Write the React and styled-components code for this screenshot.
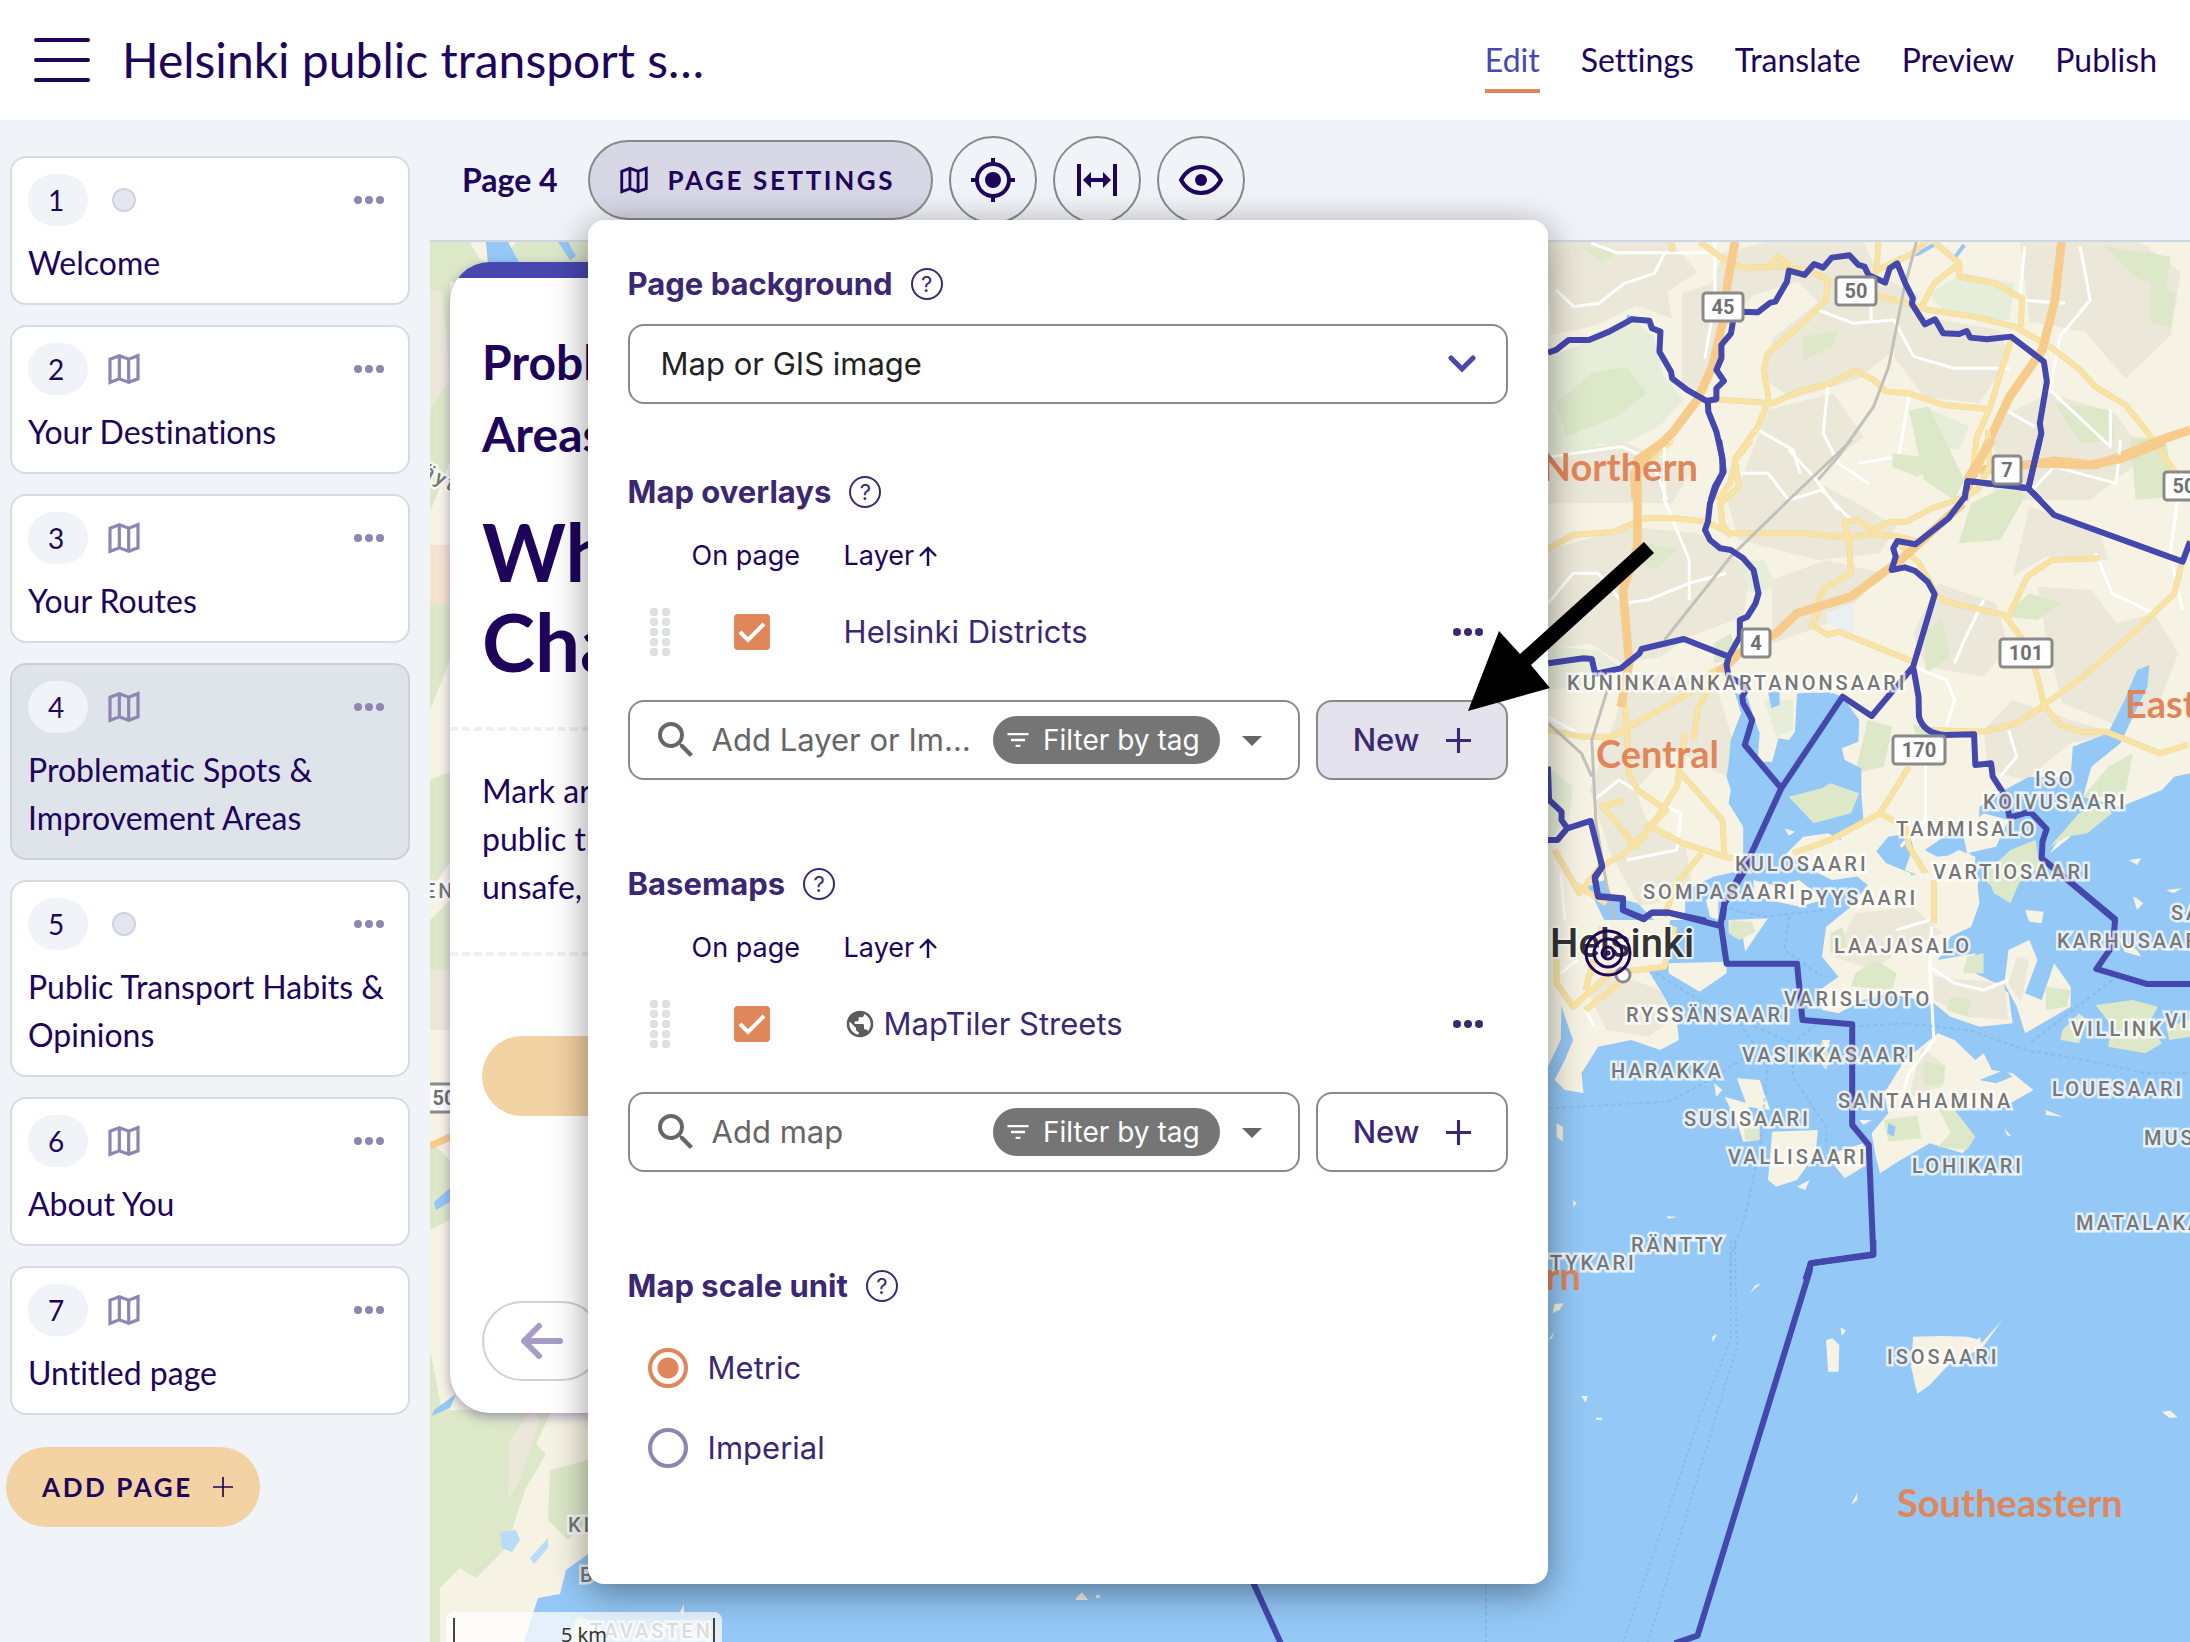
import React, { useState } from 'react'
import styled, { createGlobalStyle } from 'styled-components'
import { MdArrowDropDown, MdFilterList, MdPublic, MdSearch } from 'react-icons/md'

const GlobalStyle = createGlobalStyle`
    * {
        box-sizing: border-box;
    }

    body {
        margin: 0;
        background: #f0f3f8;
        color: #1e045b;
        font-family: Lato, sans-serif;
        font-size: 32px;
        font-variant-ligatures: none;
        line-height: 48px;
    }

    button, input, select {
        font: inherit;
        color: inherit;
    }

    h1, h2, h3, p {
        margin: 0;
    }

    svg {
        display: block;
        flex: none;
    }
`

const Page = styled.div`
    display: flex;
    flex-direction: column;
    height: 100vh;
    overflow: hidden;
`

const Header = styled.header`
    display: flex;
    align-items: center;
    flex: none;
    height: 120px;
    padding: 0 33px 0 34px;
    background: #fff;
`

const MenuButton = styled.button`
    padding: 0;
    border: 0;
    background: none;
`

const SurveyTitle = styled.h1`
    max-width: 584px;
    margin-left: 32px;
    overflow: hidden;
    font-size: 48px;
    font-weight: 400;
    line-height: 72px;
    text-overflow: ellipsis;
    white-space: nowrap;
`

const Nav = styled.nav`
    display: flex;
    gap: 41px;
    margin-left: auto;
`

const NavLink = styled.a`
    padding: 8px 0 5px;
    border-bottom: 4px solid ${props => props.$active ? '#df875a' : 'transparent'};
    color: ${props => props.$active ? '#4747ae' : '#1e045b'};
    text-decoration: none;
`

const Body = styled.div`
    display: flex;
    flex: 1;
    min-height: 0;
`

const Sidebar = styled.aside`
    display: flex;
    flex-direction: column;
    flex: none;
    gap: 20px;
    width: 430px;
    padding: 36px 20px 0 10px;
`

const PageCard = styled.article`
    padding: 16px;
    border: 2px solid ${props => props.$active ? '#c9d2dc' : '#d4dbe4'};
    border-radius: 16px;
    background: ${props => props.$active ? '#dfe3ea' : '#fff'};
`

const PageCardTop = styled.div`
    display: flex;
    align-items: center;
    height: 52px;
    margin-bottom: 13px;
    color: #8f85b3;
`

const PageNumber = styled.span`
    width: 60px;
    padding-right: 4px;
    border-radius: 26px;
    background: #f0f3f8;
    color: #1e045b;
    font-size: 28px;
    line-height: 52px;
    text-align: center;
`

const PageKind = styled.span`
    display: flex;
    justify-content: center;
    width: 32px;
    margin-left: 20px;
`

const Dot = styled.span`
    width: 24px;
    height: 24px;
    border: 2px solid #ccd3e1;
    border-radius: 50%;
    background: #e6e6f3;
`

const MoreButton = styled.button`
    display: block;
    margin-left: auto;
    padding: 8px;
    border: 0;
    background: none;
    color: inherit;
`

const PageName = styled.p`
    font-size: 32px;
    line-height: 48px;
`

const AddPageButton = styled.button`
    display: flex;
    align-items: center;
    align-self: flex-start;
    gap: 20px;
    height: 80px;
    margin: 12px 0 0 -4px;
    padding: 0 27px 0 36px;
    border: 0;
    border-radius: 40px;
    background: #f3d2a4;
    font-size: 26px;
    font-weight: 700;
    letter-spacing: .1em;
`

const Workspace = styled.main`
    display: flex;
    flex-direction: column;
    flex: 1;
    min-width: 0;
`

const Toolbar = styled.div`
    position: relative;
    z-index: 2;
    display: flex;
    align-items: center;
    flex: none;
    gap: 16px;
    height: 122px;
    padding-left: 32px;
    border-bottom: 2px solid #cdd7e3;
`

const ToolbarLabel = styled.strong`
    margin-right: 14px;
`

const PopoverAnchor = styled.div`
    position: relative;
`

const SettingsButton = styled.button`
    display: flex;
    align-items: center;
    gap: 20px;
    height: 80px;
    padding: 0 36px 0 30px;
    border: 2px solid #848c8b;
    border-radius: 40px;
    background: #d8d7e5;
    font-size: 26px;
    font-weight: 700;
    letter-spacing: .1em;
`

const RoundButton = styled.button`
    display: flex;
    align-items: center;
    justify-content: center;
    width: 88px;
    height: 88px;
    padding: 0;
    border: 2px solid #848c8b;
    border-radius: 50%;
    background: #f0f3f8;
`

const Panel = styled.section`
    position: absolute;
    z-index: 3;
    top: 100%;
    left: 0;
    width: 960px;
    padding: 44px 40px 96px;
    border-radius: 16px;
    background: #fff;
    box-shadow: 0 8px 36px rgba(0, 0, 0, .42);
    color: #3b2772;
    font-family: Inter, sans-serif;
    font-size: 31px;
`

const PanelSection = styled.section`
    margin-bottom: ${props => props.$after}px;
`

const SectionHeading = styled.div`
    display: flex;
    align-items: center;
    gap: 18px;
    height: 40px;
`

const SectionTitle = styled.h2`
    font-size: 31px;
    font-weight: 700;
    line-height: 40px;
`

const HelpButton = styled.button`
    width: 32px;
    height: 32px;
    padding: 0;
    border: 2px solid #3b2772;
    border-radius: 50%;
    background: none;
    font-size: 22px;
    line-height: 28px;
`

const SelectBox = styled.div`
    display: grid;
    align-items: center;
    margin-top: 20px;

    > * {
        grid-area: 1 / 1;
    }

    svg {
        justify-self: end;
        margin-right: 32px;
        pointer-events: none;
    }
`

const Select = styled.select`
    width: 100%;
    height: 80px;
    padding: 0 80px 0 31px;
    border: 2px solid #848c8b;
    border-radius: 16px;
    appearance: none;
    background: #fff;
    color: #222;
`

const LayerTable = styled.table`
    width: 100%;
    margin: 24px 0 12px;
    border-collapse: collapse;
    table-layout: fixed;
`

const HeadCell = styled.th`
    width: ${props => props.$width};
    height: 40px;
    padding: 0 0 0 ${props => props.$indent || 0}px;
    color: #1e045b;
    font-size: 27px;
    font-weight: 400;
    line-height: 40px;
    text-align: left;
    white-space: nowrap;
`

const SortButton = styled.button`
    display: flex;
    align-items: center;
    gap: 5px;
    padding: 0;
    border: 0;
    background: none;
`

const Cell = styled.td`
    height: 112px;
    padding: 0 ${props => props.$end || 0}px 0 ${props => props.$indent || 0}px;
`

const DragHandle = styled.span`
    display: grid;
    grid-template-columns: 8px 8px;
    gap: 2px 4px;
    margin-left: 22px;

    i {
        height: 8px;
        border-radius: 3px;
        background: #dde1e2;
    }
`

const CheckWrap = styled.span`
    display: grid;
    place-items: center;

    > * {
        grid-area: 1 / 1;
    }

    svg {
        pointer-events: none;
    }
`

const Checkbox = styled.input`
    width: 36px;
    height: 36px;
    margin: 0;
    border: 2px solid #df875a;
    border-radius: 4px;
    appearance: none;

    &:checked {
        background: #df875a;
    }
`

const LayerName = styled.label`
    display: flex;
    align-items: center;
    gap: 8px;

    svg {
        color: #5c5c5c;
    }
`

const AddRow = styled.div`
    display: flex;
    gap: 16px;
`

const SearchBox = styled.div`
    display: flex;
    align-items: center;
    flex: 1;
    min-width: 0;
    height: 80px;
    padding: 0 22px;
    border: 2px solid #848c8b;
    border-radius: 16px;
    color: #666;
`

const SearchInput = styled.input`
    flex: 1;
    min-width: 0;
    margin: 0 16px 0 12px;
    padding: 0;
    border: 0;
    outline: 0;
    background: none;
    text-overflow: ellipsis;

    &::placeholder {
        color: #666;
        opacity: 1;
    }
`

const FilterChip = styled.button`
    display: flex;
    align-items: center;
    gap: 11px;
    height: 48px;
    margin-right: 8px;
    padding: 0 20px 0 11px;
    border: 0;
    border-radius: 24px;
    background: #757575;
    color: #fff;
    font-size: 28px;
    white-space: nowrap;
`

const NewButton = styled.button`
    display: flex;
    align-items: center;
    justify-content: center;
    gap: 26px;
    width: 192px;
    height: 80px;
    padding: 0;
    border: 2px solid #848c8b;
    border-radius: 16px;
    background: ${props => props.$active ? '#e4e2ed' : '#fff'};
    font-weight: 500;
`

const RadioList = styled.div`
    margin-top: 22px;
    padding-left: 20px;
`

const RadioLabel = styled.label`
    display: flex;
    align-items: center;
    gap: 20px;
    height: 80px;
`

const Radio = styled.input`
    width: 40px;
    height: 40px;
    margin: 0;
    border: 4px solid #8f85b3;
    border-radius: 50%;
    appearance: none;

    &:checked {
        border-color: #df875a;
        background: radial-gradient(#df875a 10px, #fff 11px);
    }
`

const Pointer = styled.svg`
    position: absolute;
    top: 322px;
    left: 880px;
    pointer-events: none;
`

const Stage = styled.div`
    position: relative;
    flex: 1;
    overflow: hidden;
`

const MapCanvas = styled.svg`
    position: absolute;
    inset: 0;
    width: 100%;
    height: 100%;

    path {
        vector-effect: non-scaling-stroke;
        stroke-linejoin: round;
    }
`

const PlaceLabel = styled.text`
    fill: #777;
    stroke: #fff;
    stroke-opacity: .75;
    stroke-width: 5px;
    paint-order: stroke;
    font: 500 20px Roboto, sans-serif;
    letter-spacing: 3px;
`

const CityLabel = styled.text`
    fill: #333;
    stroke: #fff;
    stroke-opacity: .75;
    stroke-width: 4px;
    paint-order: stroke;
    font: 500 40px Roboto, sans-serif;
`

const DistrictLabel = styled.text`
    fill: #df875a;
    font: 700 38px Lato, sans-serif;
`

const ShieldText = styled.text`
    fill: #707070;
    font: 700 20px Roboto, sans-serif;
    text-anchor: middle;
`

const ScaleBar = styled.div`
    position: absolute;
    bottom: -10px;
    left: 16px;
    width: 276px;
    height: 40px;
    padding: 6px 7px 0;
    border-radius: 8px;
    background: rgba(255, 255, 255, .75);

    span {
        display: block;
        height: 34px;
        border: solid #444;
        border-width: 0 2px 2px;
        color: #333;
        font: 20px/34px 'Noto Sans', sans-serif;
        text-align: center;
    }
`

const SurveyCard = styled.article`
    position: relative;
    display: flex;
    flex-direction: column;
    width: 880px;
    min-height: 1151px;
    margin: 20px 0 0 20px;
    padding-bottom: 32px;
    overflow: hidden;
    border-radius: 40px;
    background: #fff;
    box-shadow: 0 4px 12px rgba(30, 4, 91, .35);

    &::before {
        content: '';
        height: 16px;
        background: #4747ae;
    }
`

const SurveyHeading = styled.div`
    padding: 48px 32px 41px;
    border-bottom: 4px dashed #eff0f5;

    h3 {
        margin-bottom: 36px;
        font-size: 48px;
        line-height: 72px;
    }

    h2 {
        font-size: 80px;
        line-height: 90px;
    }
`

const SurveyText = styled.p`
    padding: 36px 32px 41px;
    border-bottom: 4px dashed #eff0f5;
`

const SurveyAction = styled.button`
    flex: none;
    height: 80px;
    margin: 80px 32px 0;
    border: 0;
    border-radius: 40px;
    background: #f3d2a4;
`

const BackButton = styled.button`
    display: flex;
    align-items: center;
    justify-content: center;
    width: 120px;
    height: 80px;
    margin: auto 32px 0;
    padding: 0;
    border: 2px solid #cfd3d3;
    border-radius: 40px;
    background: #fff;
    color: #a79cc4;
`

const MapIcon = ({ size }) => (
    <svg width={size} height={size} viewBox="0 0 24 24" fill="none" stroke="currentColor" strokeWidth="2.4">
        <path d="M1.5 4.6 8.5 2l7 2.6 7-2.6v17.4l-7 2.6-7-2.6-7 2.6zM8.5 2v17.4M15.5 4.6V22" />
    </svg>
)

const MoreIcon = () => (
    <svg width="30" height="8" viewBox="0 0 30 8" fill="currentColor">
        <circle cx="4" cy="4" r="4" />
        <circle cx="15" cy="4" r="4" />
        <circle cx="26" cy="4" r="4" />
    </svg>
)

const PlusIcon = ({ size, weight }) => (
    <svg width={size} height={size} viewBox="0 0 24 24" fill="none" stroke="currentColor" strokeWidth={weight}>
        <path d="M12 0v24M0 12h24" />
    </svg>
)

const pages = [
    { name: 'Welcome' },
    { name: 'Your Destinations', map: true },
    { name: 'Your Routes', map: true },
    { name: 'Problematic Spots & Improvement Areas', map: true },
    { name: 'Public Transport Habits & Opinions' },
    { name: 'About You', map: true },
    { name: 'Untitled page', map: true }
]

const places = [
    [1567, 690, 'KUNINKAANKARTANONSAARI'],
    [2035, 786, 'ISO'],
    [1983, 809, 'KOIVUSAARI'],
    [1896, 836, 'TAMMISALO'],
    [1735, 871, 'KULOSAARI'],
    [1933, 879, 'VARTIOSAARI'],
    [1643, 899, 'SOMPASAARI'],
    [1800, 905, 'PYYSAARI'],
    [1834, 953, 'LAAJASALO'],
    [2057, 948, 'KARHUSAARI'],
    [2171, 920, 'SALMI'],
    [1784, 1006, 'VARISLUOTO'],
    [1626, 1022, 'RYSSÄNSAARI'],
    [2071, 1036, 'VILLINK'],
    [2165, 1028, 'VIKARI'],
    [1742, 1062, 'VASIKKASAARI'],
    [1611, 1078, 'HARAKKA'],
    [2052, 1096, 'LOUESAARI'],
    [1838, 1108, 'SANTAHAMINA'],
    [1684, 1126, 'SUSISAARI'],
    [1728, 1164, 'VALLISAARI'],
    [1912, 1173, 'LOHIKARI'],
    [2144, 1145, 'MUSTA'],
    [2076, 1230, 'MATALAKARI'],
    [1631, 1252, 'RÄNTTY'],
    [1550, 1270, 'TYKARI'],
    [1887, 1364, 'ISOSAARI'],
    [424, 898, 'EN'],
    [568, 1532, 'KL'],
    [580, 1582, 'B'],
    [590, 1638, 'TAVASTEN']
]

const shields = [
    [1723, 307, '45'],
    [1856, 291, '50'],
    [2007, 470, '7'],
    [2184, 486, '50'],
    [1756, 643, '4'],
    [2026, 653, '101'],
    [1919, 750, '170'],
    [444, 1098, '50']
]

const paint = {
    sea: '#94c8f6',
    land: '#f7f3e4',
    built: '#ece8d9',
    park: '#dde8c9',
    wood: '#e6edd8',
    border: '#4447ab'
}

// each tile keeps its own grid, placed on the canvas by origin and scale
const Tile = ({ x, y, sx, children }) => (
    <g transform={`translate(${x} ${y}) scale(${sx} .3333)`}>{children}</g>
)

const Road = ({ d, color = '#f8e3a4', width = 5 }) => <>
    {color !== '#fff' && <path d={d} fill="none" stroke="#efd9a0" strokeWidth={width + 1} />}
    <path d={d} fill="none" stroke={color} strokeWidth={width} />
</>

const Border = ({ d }) => <path d={d} fill="none" stroke={paint.border} strokeWidth="6" />

const NorthTile = () => (
    <Tile x={1400} y={0} sx={0.5038}>
        <path fill={paint.built} d="M290 726h250l50 90-60 60 10 80-70-40-80 60-90 30zM560 880l60-30 20-90 90-34h190l30 100 80 60-30 140-90 110-130 60-60-60 20-120 90-110-40-60-90 40-60 110-30 180-50-20zM1000 940l190 50 20 80-60 140-110-20-60-120zM1230 726h240l80 90-20 190-90 130-80-140-110-30zM730 1230l130-50 60 130-90 110-60 90h-110zM1180 1260l110-80 130 60 60 130-110 130h-190zM300 1350l150-20 130 80-40 100H294z" />
        <path fill={paint.wood} d="M294 1070l90-50 80-60 40 50 20 120 40 70-50 80-80 60-40-10-50 50-50-20zM1040 1220l90 60-20 70-80-20zM1050 880l70-60 100 30-10 110-120-10z" />
        <path fill={paint.park} d="M380 1120l70-20 40 80-60 70-100 60-20-100zM1010 1230l40-10 70 220-20 60-60-60zM800 1010l70-20-10 50-60 40zM1300 1210l110 20 10 90-70 10zM1400 740l130 30-10 100-60-40zM1490 850l50 30-10 100-40-10zM360 740l80 10-40 40zM1450 1310l70 10 20 170-80 10z" />
        <path fill="none" stroke="#94c8f6" strokeWidth="4" d="M990 775l40-15 35-30 35 45 20-40M450 950l20 8" />
        <Road color="#fff" width={3} d="M310 870l35 50 50-10 50-60 60-30 20-60M380 730l50 28h190M625 726v180l-20 170M830 930l70 40 80-10 40 110 80 35h110M935 880v80M850 1150l-10 150 30 90 60 60M1010 1190l-20 180-80 20M1240 740l-10 160 90 10M1350 740l20 160-60 110-20 160 120 170V1230M700 1280l80 70 30 150M300 1370l140-30 60 40 30 120M1190 1220l70 60" />
        <Road d="M595 726l45 49 40 28 80-3 50 10 40 30-5 60-45 70-70 90-8 50 10 90-22 80-42 90-13 80-25 50M945 885l105 45 90 20 80 30 70 60 60 70 30 50 60 55 40 75 60 130M625 1198l115 12 50-35 65-25 50-38 35 28 25 35 45 5 70 35 90 13M1215 1010l-25 120-20 98-25 82-10 120M1060 726l50 64v40l70 20 55 45-3 85M950 726l-5 94M948 810l70-50 30-40M1110 790l-50 60-25 70M540 726v30M730 800l20-30 30 30M490 1390l50-70" />
        <Road color="#f6cb8c" width={8} d="M665 726l-15 124-10 120-20 130-30 100-50 100-50 70-25 50 3 80M1313 726l-13 174-25 150-65 140-40 130-40 130-10 50M1150 1410l90-15 60-13 80 13 50-25 70-45 68-35" />
        <path fill="none" stroke="#c2c0bb" strokeWidth="3" d="M1025 726l-25 144-30 230-30 120-70 150-75 130" />
        <Border d="M294 1058l16-8 25-30h40l40-25 45-37 35 4 5 23 17 10-2 60 23 60 2 20 30 35 38 33 20-5v-33l15-22-15-33 10-35v-40l19-35 5-45 13-20 35 2 25-29 10-3 23-60 4-33 31 13 19-33 18 11 17-30 35-7 18 29 12 5 8 25 33 23 9-43 15-15 16 60 15 45-2 17 26 61 20-15 16 42 32 2 15-9 7 20 33 5 48-8 65 75 6 60-14 125 3 30-26 165M611 1203l1 32 16 60 12 80v45l-15 40-8 40M1120 1500l7-57 120 22 23 35" />
    </Tile>
)

const CentreTile = () => (
    <Tile x={1540} y={440} sx={0.4146}>
        <path fill={paint.built} d="M20 330l200-70 160 20 130 110-20 140-130 60-70 60-90 20-80-60-100 20zM450 180l60-60 120-20 150 100 80 60-40 80-150 20-190-60zM560 420l130-60 140 40-110 140-160 70zM220 700l200 20 50 200-20 90-130-80-90 120 30 100 90 60 20 150-130 40-70-160-50-190zM960 430l140 60 30 130-60 90-140-30-30-100zM1200 440l130 10 60 100 90-30 60 120-50 160-90 60-140-70-40-200zM1140 780l140 60 110 40-110 30-110 110-90-30-10-120zM1180 200l170 70 20 90-150-10-80 60z" />
        <path fill={paint.wood} d="M20 620l120 10 70 70-50 30-140 20zM20 980l60 60-10 100-50 60zM540 780h70v90l-40 20zM480 370l60-10 30 80-60 20z" />
        <path fill={paint.park} d="M1040 190l100-60 30 40-60 130-100 10zM1180 460l80 30-60 50-80-10zM790 840l60 20-20 120-70 20zM930 570l40-30 20 110-60 50zM900 850l60 30 20 90-70-60zM850 40l130 20-70 50-60-30zM230 300l100 30-50 60-60-30zM420 610l40-30 20 70-60 20zM1310 1070l60-90 60-40-20 130z" />
        <path fill="#ebeff2" d="M690 520l65-30v100l-60-40z" />
        <path fill={paint.sea} d="M470 758l30 12 15 60 15 50-5 85h35l15-70 25 5 15-25 5-115 80-3 30 13 40 70-2 65-40 20 7 35 40 25v75l5 80-60 45 25 55 55 10 40-60 50-10 10 40-20 70 60 30 20 80v60H350v-110l70-40 70-20v-130l-35-70 5-40-10-40 5-40 5-70 25-80zM550 755h28v40l-20 10zM115 1340l40-20 20 50 60 20 40 50h-120zM1060 1100l60-50 60-40h100l5-90 85-40 40-100 30-90 30-15-5 65-35 90-30 80-70 70-20 90 90 30 100-50 30-40 38-10v440h-530l20-120-20-80-80 10-30-20 70-60 60 20z" />
        <path fill={paint.land} d="M595 1240l40-50 60-10 30 20 50-20 60 90 60 30-10 60-60 10-60-60-60 10-50-30zM515 1320l60 20 50-20 60 60-60 20-110-30zM790 1385l50-30 60 10 40 75H760zM920 1290l90-60 40 20-10 190h-90zM1020 1180l50-60 60 20-30 80-70 20zM1420 1260l30-5-10 20zM1430 1370l25 20-15 20zM590 1165l25 10-15 12zM1230 1240l30-60 20 10z" />
        <path fill={paint.park} d="M600 1070l80-25 20-15 70 30-20 60-90 30zM1075 1300l60-70 60-30 10 80-50 50-20 60-40-30zM1230 1220l70-100 60-30 20 30-60 60-50 10z" />
        <Road color="#fff" width={3} d="M20 490l60-90h60l60 90 60-10 100-50 90-30M300 20v160l60 180v120M480 100h70l50 80 80-30 70 90M900 680l80 40 20 60-20 80M600 30l60 80 60 100M1180 160l60-80 150 50 10-130M1540 160l-20 180 30 170M1130 870l20 80-40 60M1340 340l40 120 100 60M1070 480l-50 130-20 60M930 970v170l-60 80M20 830l100 70M130 1080l60-60 80 60 70 40-10 110-120 30M60 1440l-10-140" />
        <Road d="M20 325l60-40 100-10 70-40h80l70 10 60 35h180l100 13 50-10 70 5 60 20M510 0l-40 60 10 80-45 50 5 60 20 40M740 290l-5-45 30-5 40 30 40-25h40l60-40 60-25 50-30 30-70-5-110M745 290l5 110-60 40-20 40v40l-15 35 40 30 25-10 180 90M865 310l50 60 45 100 20 15 140 40 60 100 25 110 10 60 40 60 50 20h60l130 65 68-25M1130 530l45-120 60-50 115-5M1210 800l100-90 120-130 100-120 20-100 18-60M1210 800l-60 50-80 25-130-5M20 870l80 20h70l60-40 130-90 60-70M150 900l60-30-10-120M210 870l5 130 20 50 70 60-100 130-60 40-50 80-60-130M370 900l10-90 50-130M350 880l-20 160-40 80-60 100-30-50-50-70 50-20M340 1000l100 140 5 110-100-40-90-60M445 1250l20 5M610 1240l90-40 120-80 70-140M820 1120l60 40 10 60 50 100 10 120M80 1330l80 60M390 1240l-60 90-30 100" />
        <Road color="#f6cb8c" width={8} d="M305 0l-70 60v260l-35 130 15 220-20 130M1090 0l-60 120M1205 70l120 5 80-20 100-50M1020 190l-150 170-120 110-130 50-50 60-90 60-50 60" />
        <path fill="none" stroke="#c2c0bb" strokeWidth="3" d="M752 0L600 180 460 350 300 600M20 850l80 90 25 70M165 740l-40 160 10 250 25 180 20 110" />
        <Border d="M432 0l8 60 3 35-18 45-15 50-5 55-7 25 12 30 25 25 25 5 30 25 25 35 12 70-7 30-20 40-18 10v50l-27 60-5 25 5 35 30 20 12 20-9 20 2 20 22 50-18 75 88 130M20 670l85-15 20 2 8 45 62-17 45-45 5-13 102-30 108 53M440 1440l5-50 65-150 72-195 148-275 70 58 100-148 52-217-17-38-30-32-25-11-32 8 10-40-6-25 10-22 43 10 80-78 40-65 6-47 147 22L1205 0M1178 145l62 80 310 140 18-60M900 680l13 90 1 60q11 50 61 55l72-2 3 92 38-5 4 40 26 50 15 73 49-18 40 52-10 38-2 50 180 185M19 980l3 100 30 35v25l14 25 56-22 28 137-18 35 8 53 60 7v35l50 25 20-17h40l90 24M19 1200h23l24-35" />
    </Tile>
)

const IslandTile = () => (
    <Tile x={1540} y={860} sx={0.4146}>
        <path fill={paint.sea} d="M0 180h1568v1100H0z" />
        <path fill={paint.land} d="M19 180h295l-14 130-40 20 30 60 40 90 5 60-45 30-70-30-80 20-40 80 5 60-45-10-25-30 25-60 20-60-20-70-10-40H19zM19 430h33l-2 110-31 80zM310 310l140-5v35l-65 55-75-55zM455 180l95-5-25 45-30 55-5-40-35-20zM750 140l50-80 60-10 190-30 10 110-20 70-50 30-30 70 90-20v60l50 30 30 30 10 90-80 10-70-30-40-40-110-30-60 20-60 40-40-10-5-60 45-40-40-60 10-90zM1130 270l50-30 20 60-30 100 40 20 30-110 40 70v60l-110 80-20-80-30-70zM880 600l80-80 40 20 50 60 20-20 20 50 50 10 50 50-70 50-130 10 10 40 50 40-30 50-80-30-70 50-50 40-10-50-10-70 40-60-10-60zM475 655l55 5 25 90-55-10zM445 710l55 20 30 110-40 5-15-60zM560 815l110-5-5 70-45 80-50 20-20-20zM690 885l90-35v70l-45 35zM1170 150l45 5-5 35-30-5zM1395 230l45 40 10 20-40-15zM400 120l30-10v70l-20-10zM420 670l20 20-15 20zM620 980l30-20-10 30zM40 790l15 10v45l-15-15zM80 1020l8 10-8 12zM305 1068l25 3-20 5zM1220 750l40 20-40-5zM1120 805l18 25-12-5zM1510 90l38-5-20 15zM1435 110l20 20-15 8zM770 780h30l-20 15zM680 540h20l-10 40z" />
        <path fill={paint.built} d="M160 330l130 60 30 90-60 50-100-20-40-100zM760 160l140-20 70 80-110 60-60 50-90-40zM950 350l170 20 10 110-100-10-80-50zM1150 290l30 10-20 130-30-60zM920 560l60 60-10 60-80 30z" />
        <path fill={paint.park} d="M460 180l50 5 10 30-40 25-25-20zM700 220l30-20 10 60-40 20zM760 340l50-40 50 40-10 50-100-10zM990 410l50 10-10 50-50-20zM1220 380l60 10-10 50-50 10zM830 780l80-15 10 70-80 10zM960 740l40 10 50 80-20 40-70-10 30-40zM925 600l50 20v50l-50 10zM1340 435l90-15 60 20-20 50 30 60-40 30-90-20 10-60zM1260 510l40-50 20 20-20 70-45-10zM1510 500l58-20v50l-50 10zM680 540l20 50-10 40-20-30zM490 790h40v50h-35zM1070 10l90-10-10 40-30 60-40-30zM1030 290l40-10v60h-50z" />
        <path fill={paint.sea} d="M840 790l18 10-5 30-15-10zM1060 660l60-30 20 20-40 20z" />
        <Road color="#fff" width={3} d="M940 180l-80 30M945 200l-5 120 10 220-60 100-15 60M940 320l60 50 70 20 60-30M50 340l40-40M110 450l20 50" />
        <Road d="M40 240v130l40 70 90-100 130-20 25-120M110 450l80-80M150 200l-40 190M950 60v130" />
        <path fill="none" stroke="#7fb0e0" strokeWidth="2" strokeDasharray="4 3" strokeOpacity=".5" d="M280 340l130 100 200 110v100l80 150v60M480 490l70 120-20 260-40 220-30 100v100M753 500l130-10 150 20 140 60 140 30 150 40h105M20 745l140-10 150-10 120-80 60-50M1380 360l-200 190M600 170l-10 100 90 80M440 140l100 30 150-20M620 540l60-60" />
        <Border d="M510 0l-65 130-9 60 14 121h170l13 169 120 13v302l40 60 11 330-151 25-13 50M146 0l4 20-18 30 8 60 60 7v33l50 28 20-20h40l126 40M1215 0l172 180-5 75-40 72 121 45h105" />
    </Tile>
)

const OpenSeaTile = () => (
    <Tile x={1540} y={1240} sx={0.4146}>
        <path fill={paint.land} d="M900 290l70-2 60 2 25 8 5-8 5 20 50-70-40 70-10 15-80 50-45 60-30 27-15-82zM690 300l15-5 17 20-2 80h-25zM725 262l13 10-10 15zM505 160l15-25 12-3zM415 290l12-8-10 25zM100 468h15l-5 20zM135 533h15v6h-15zM30 220l5-28 22-2-10 20zM20 300l14-25-5 20zM750 795l15-35v20zM1500 515l20-3 18 20-20 2z" />
        <path fill="none" stroke="#7fb0e0" strokeWidth="2" strokeDasharray="3 3" strokeOpacity=".5" d="M460 0v300l-60 180L200 1210M470 0l5 320-145 600-70 290" />
        <Border d="M804 0v43L653 70l-3 25-270 1092-55 23" />
    </Tile>
)

const MapView = () => (
    <MapCanvas viewBox="430 242 1760 1400" preserveAspectRatio="xMinYMin slice" role="img" aria-label="Map of Helsinki">
        <rect x="430" y="242" width="1760" height="1400" fill={paint.land} />
        <path fill={paint.sea} d="M588 920h1610v730H588z" />
        <NorthTile />
        <CentreTile />
        <IslandTile />
        <OpenSeaTile />

        {/* west coast */}
        <path fill={paint.land} d="M430 242h158v1342h62l-10 34-40-6-14 30H430z" />
        <path fill={paint.park} d="M430 242h40l10 18 20 4 16-22h72v40H450v180l-20 50zM430 600l10-20 10 20v60l-20 50zM430 780l20-8v90l-20 30zM430 920l20-20v80h-20zM430 1140l20 20v60l-20 10zM430 1350l12 60h110l-16 34 10 10-20 34-20 60-30 30-16-10-20 20v54h30l-20 20h-20zM550 1470l38-10v60l-20 20-20-20zM555 1600l35-8 55 6-6 14-30 6-20 30h-40z" />
        <path fill="#f3e3cf" d="M430 545h20v60h-20z" />
        <path fill={paint.built} d="M430 290h12l8 90-20 30zM430 970h20v60h-20zM510 1440l20-30 10 10-20 60-12 20z" />
        <path fill={paint.sea} d="M486 242h22l12 22h-32zM558 242h10l8 14-6 4zM588 1554l-22 16-6 24-22 4-14 44h42l12-26 20 8 12 18h30l14-58h-66zM434 1410l22-16-6 14-18 8zM434 1202l16-14v14l-14 8z" />
        <path fill="#b9dcf8" d="M500 1532l16-2 4 10-8 12-10-4zM530 1558l18-20v10l-14 16z" />
        <path fill="none" stroke="#f6cb8c" strokeWidth="7" d="M430 1146l22-10" />
        <path fill="#f7f3e4" d="M1076 1598l6-6 6 8h-12zM1096 1595h4v3h-4zM680 1612l4-8v12z" />
        <path fill="none" stroke="#7fb0e0" strokeWidth="2" strokeDasharray="4 3" strokeOpacity=".6" d="M1486 1584v58" />
        <path fill="none" stroke={paint.border} strokeWidth="6" d="M1252 1580l30 66" />

        {shields.map(([x, y, label]) => {
            const width = 16 + label.length * 12
            return <g key={`${x}-${label}`}>
                <rect x={x - width / 2} y={y - 14} width={width} height="28" rx="3" fill="#fff" stroke="#8a8a8a" strokeWidth="3" />
                <ShieldText x={x} y={y + 7}>{label}</ShieldText>
            </g>
        })}
        {places.map(([x, y, label]) => <PlaceLabel key={label} x={x} y={y}>{label}</PlaceLabel>)}
        <PlaceLabel x="420" y="480" transform="rotate(28 430 480)">äyt</PlaceLabel>
        <CityLabel x="1550" y="957">Helsinki</CityLabel>
        <DistrictLabel x="1698" y="481" textAnchor="end">Northern</DistrictLabel>
        <DistrictLabel x="1596" y="768">Central</DistrictLabel>
        <DistrictLabel x="2125" y="718">Eastern</DistrictLabel>
        <DistrictLabel x="1581" y="1290" textAnchor="end">Southern</DistrictLabel>
        <DistrictLabel x="1897" y="1517">Southeastern</DistrictLabel>

        <circle cx="1623" cy="975" r="7" fill="#fff" stroke="#8a8a8a" strokeWidth="3" />
        <g fill="none" stroke="#1e045b" strokeWidth="3">
            <circle cx="1608" cy="953" r="22" />
            <circle cx="1608" cy="953" r="14" />
            <circle cx="1608" cy="953" r="6" />
            <circle cx="1608" cy="953" r="1" />
        </g>
    </MapCanvas>
)

const Heading = ({ id, title }) => (
    <SectionHeading>
        <SectionTitle id={id}>{title}</SectionTitle>
        <HelpButton aria-label={`Help: ${title}`}>?</HelpButton>
    </SectionHeading>
)

const LayerSection = ({ id, title, layer, online, placeholder, after, highlight }) => {
    const [checked, setChecked] = useState(true)

    return (
        <PanelSection $after={after} aria-labelledby={id}>
            <Heading id={id} title={title} />
            <LayerTable aria-labelledby={id}>
                <thead>
                    <tr>
                        <HeadCell $width="64px" />
                        <HeadCell $width="120px">On page</HeadCell>
                        <HeadCell $indent={32}>
                            <SortButton>
                                Layer
                                <svg width="18" height="20" viewBox="0 0 18 20" fill="none" stroke="currentColor" strokeWidth="2.4">
                                    <path d="M9 20V2M1 10l8-8 8 8" />
                                </svg>
                            </SortButton>
                        </HeadCell>
                        <HeadCell $width="80px" />
                    </tr>
                </thead>
                <tbody>
                    <tr>
                        <Cell>
                            <DragHandle>{Array.from({ length: 10 }, (_, i) => <i key={i} />)}</DragHandle>
                        </Cell>
                        <Cell>
                            <CheckWrap>
                                <Checkbox type="checkbox" id={`${id}-layer`} checked={checked} onChange={() => setChecked(!checked)} />
                                {checked && <svg width="28" height="22" viewBox="0 0 28 22" fill="none" stroke="#fff" strokeWidth="4">
                                    <path d="M2 11l8 8L26 3" />
                                </svg>}
                            </CheckWrap>
                        </Cell>
                        <Cell $indent={32}>
                            <LayerName htmlFor={`${id}-layer`}>
                                {online && <MdPublic size={32} />}
                                {layer}
                            </LayerName>
                        </Cell>
                        <Cell $end={17}>
                            <MoreButton aria-label={`${layer} options`}><MoreIcon /></MoreButton>
                        </Cell>
                    </tr>
                </tbody>
            </LayerTable>
            <AddRow>
                <SearchBox>
                    <MdSearch size={48} />
                    <SearchInput placeholder={placeholder} aria-label={placeholder} />
                    <FilterChip><MdFilterList size={28} />Filter by tag</FilterChip>
                    <MdArrowDropDown size={48} />
                </SearchBox>
                <NewButton $active={highlight}>New <PlusIcon size={25} weight={3} /></NewButton>
            </AddRow>
        </PanelSection>
    )
}

const SettingsPanel = () => {
    const [unit, setUnit] = useState('Metric')

    return (
        <Panel>
            <PanelSection $after={68}>
                <Heading id="background" title="Page background" />
                <SelectBox>
                    <Select aria-labelledby="background">
                        <option>Map or GIS image</option>
                    </Select>
                    <svg width="28" height="18" viewBox="0 0 28 18" fill="none" stroke="#4747ae" strokeWidth="5" strokeLinecap="round">
                        <path d="M3 3l11 11L25 3" />
                    </svg>
                </SelectBox>
            </PanelSection>
            <LayerSection id="overlays" title="Map overlays" layer="Helsinki Districts" placeholder="Add Layer or Image overlay" after={84} highlight />
            <LayerSection id="basemaps" title="Basemaps" layer="MapTiler Streets" placeholder="Add map" after={94} online />
            <PanelSection $after={0}>
                <Heading id="unit" title="Map scale unit" />
                <RadioList role="radiogroup" aria-labelledby="unit">
                    {['Metric', 'Imperial'].map(name => (
                        <RadioLabel key={name}>
                            <Radio type="radio" name="unit" checked={unit === name} onChange={() => setUnit(name)} />
                            {name}
                        </RadioLabel>
                    ))}
                </RadioList>
            </PanelSection>
            <Pointer width="186" height="169" viewBox="0 0 186 169">
                <path d="M0 169L31 89l21 23L176 0l10 11L63 123l19 23z" />
            </Pointer>
        </Panel>
    )
}

const App = () => {
    const [showSettings, setShowSettings] = useState(true)

    return (
        <Page>
            <GlobalStyle />
            <Header>
                <MenuButton aria-label="Menu">
                    <svg width="56" height="44" viewBox="0 0 56 44" stroke="#1e045b" strokeWidth="4" strokeLinecap="round">
                        <path d="M2 2h52M2 22h52M2 42h52" />
                    </svg>
                </MenuButton>
                <SurveyTitle>Helsinki public transport survey</SurveyTitle>
                <Nav>
                    {['Edit', 'Settings', 'Translate', 'Preview', 'Publish'].map(name => (
                        <NavLink key={name} href={`#${name.toLowerCase()}`} $active={name === 'Edit'}>{name}</NavLink>
                    ))}
                </Nav>
            </Header>
            <Body>
                <Sidebar>
                    {pages.map((page, i) => (
                        <PageCard key={page.name} $active={i === 3}>
                            <PageCardTop>
                                <PageNumber>{i + 1}</PageNumber>
                                <PageKind>{page.map ? <MapIcon size={32} /> : <Dot />}</PageKind>
                                <MoreButton aria-label={`${page.name} options`}><MoreIcon /></MoreButton>
                            </PageCardTop>
                            <PageName>{page.name}</PageName>
                        </PageCard>
                    ))}
                    <AddPageButton>ADD PAGE <PlusIcon size={20} weight={2} /></AddPageButton>
                </Sidebar>
                <Workspace>
                    <Toolbar>
                        <ToolbarLabel>Page 4</ToolbarLabel>
                        <PopoverAnchor>
                            <SettingsButton onClick={() => setShowSettings(!showSettings)}>
                                <MapIcon size={28} />PAGE SETTINGS
                            </SettingsButton>
                            {showSettings && <SettingsPanel />}
                        </PopoverAnchor>
                        <RoundButton aria-label="Start position">
                            <svg width="44" height="44" viewBox="0 0 44 44" fill="none" stroke="#1e045b" strokeWidth="4">
                                <circle cx="22" cy="22" r="16" />
                                <circle cx="22" cy="22" r="8" fill="#1e045b" stroke="none" />
                                <path d="M22 0v7M22 37v7M0 22h7M37 22h7" />
                            </svg>
                        </RoundButton>
                        <RoundButton aria-label="Zoom range">
                            <svg width="40" height="32" viewBox="0 0 40 32" fill="#1e045b">
                                <path d="M0 0h4v32H0zM36 0h4v32h-4zM6 16l8-8v6h12V8l8 8-8 8v-6H14v6z" />
                            </svg>
                        </RoundButton>
                        <RoundButton aria-label="Visibility">
                            <svg width="44" height="32" viewBox="0 0 44 32" fill="none" stroke="#1e045b" strokeWidth="4">
                                <path d="M2 16C7 7 14 3 22 3s15 4 20 13c-5 9-12 13-20 13S7 25 2 16z" strokeLinejoin="round" />
                                <circle cx="22" cy="16" r="6" fill="#1e045b" stroke="none" />
                            </svg>
                        </RoundButton>
                    </Toolbar>
                    <Stage>
                        <MapView />
                        <SurveyCard>
                            <SurveyHeading>
                                <h3>Problematic Spots & Improvement<br />Areas</h3>
                                <h2>Which are the main<br />Challenges?</h2>
                            </SurveyHeading>
                            <SurveyText>Mark areas on the map where using<br />public transport feels difficult,<br />unsafe, or slow.</SurveyText>
                            <SurveyAction aria-label="Mark on map" />
                            <BackButton aria-label="Previous page">
                                <svg width="42" height="38" viewBox="0 0 42 38" fill="none" stroke="currentColor" strokeWidth="6" strokeLinecap="round" strokeLinejoin="round">
                                    <path d="M39 19H4M18 4L3 19l15 15" />
                                </svg>
                            </BackButton>
                        </SurveyCard>
                        <ScaleBar><span>5 km</span></ScaleBar>
                    </Stage>
                </Workspace>
            </Body>
        </Page>
    )
}

export default App
